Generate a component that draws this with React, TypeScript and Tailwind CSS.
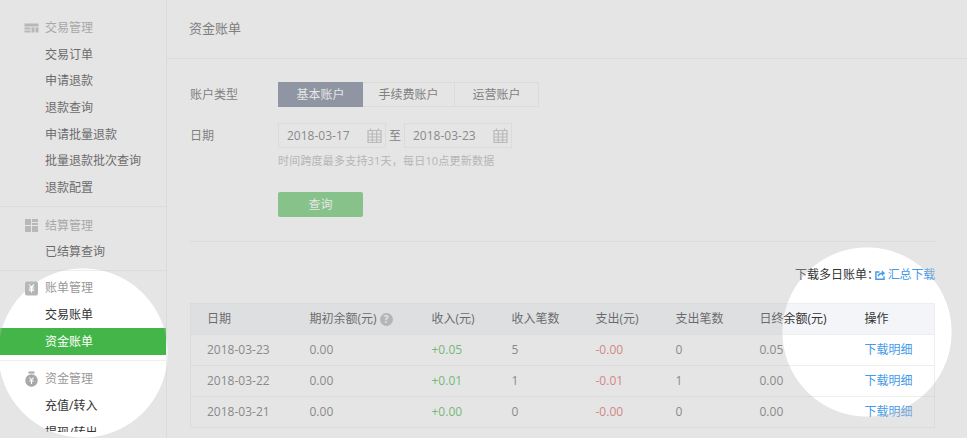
const sans = "font-['Open_Sans','Noto_Sans_CJK_SC',sans-serif]";

const NAV_GROUPS = [
  { title: "交易管理", icon: "card", tight: false, items: ["交易订单", "申请退款", "退款查询", "申请批量退款", "批量退款批次查询", "退款配置"] },
  { title: "结算管理", icon: "grid", tight: true, items: ["已结算查询"] },
  { title: "账单管理", icon: "bill", tight: false, items: ["交易账单", "资金账单"] },
  { title: "资金管理", icon: "bag", tight: false, items: ["充值/转入", "提现/转出"] },
];

const ROWS = [
  { date: "2018-03-23", open: "0.00", income: "+0.05", inCount: "5", out: "-0.00", outCount: "0", end: "0.05" },
  { date: "2018-03-22", open: "0.00", income: "+0.01", inCount: "1", out: "-0.01", outCount: "1", end: "0.00" },
  { date: "2018-03-21", open: "0.00", income: "+0.00", inCount: "0", out: "-0.00", outCount: "0", end: "0.00" },
];

function NavIcon({ name }: { name: string }) {
  if (name === "card")
    return (
      <svg width="15" height="15" viewBox="0 0 15 15" fill="#b4b4b4">
        <rect x="0.5" y="2.5" width="14" height="3" />
        <rect x="0.5" y="6.5" width="6" height="2" />
        <rect x="0.5" y="9.5" width="6" height="2" />
        <rect x="7.5" y="6.5" width="3" height="5" />
        <rect x="11.5" y="6.5" width="3" height="5" />
      </svg>
    );
  if (name === "grid")
    return (
      <svg width="15" height="15" viewBox="0 0 15 15" fill="#b4b4b4">
        <rect x="1" y="1" width="6" height="6" />
        <rect x="8" y="1" width="6" height="3" />
        <rect x="8" y="5" width="6" height="2" />
        <rect x="1" y="8" width="6" height="6" />
        <rect x="8" y="8" width="6" height="6" />
      </svg>
    );
  if (name === "bill")
    return (
      <svg width="15" height="15" viewBox="0 0 15 15">
        <rect x="1" y="0.5" width="13" height="14" rx="2" fill="#b5b5b5" />
        <path d="M5 3.5l2.5 3 2.5-3M4.8 7h5.4M4.8 9.2h5.4M7.5 6.5v5" stroke="#fff" fill="none" strokeWidth="1.2" />
      </svg>
    );
  return (
    <svg width="15" height="16" viewBox="0 0 15 16">
      <rect x="4.5" y="0.5" width="6" height="2" fill="#a8a8a8" />
      <circle cx="7.5" cy="9.5" r="6.2" fill="#a8a8a8" />
      <path d="M5.5 6.5l2 2.5 2-2.5M5.3 10h4.4M7.5 9v4" stroke="#fff" fill="none" strokeWidth="1.1" />
    </svg>
  );
}

function Sidebar() {
  return (
    <aside className="w-[167px] shrink-0 border-r border-[#eeeeee]">
      {/* the last item is cut off in the original capture */}
      <div className="h-[432px] overflow-hidden pt-[14.5px]">
        {NAV_GROUPS.map((group, i) => (
          <div
            key={group.title}
            className={i === 3 ? "" : group.tight ? "border-b border-[#eeeeee] pb-[4px] mb-[4px]" : "border-b border-[#eeeeee] pb-[5px] mb-[5px]"}
          >
            <div className="h-[27px] flex items-center pl-[24px] gap-[6px] text-[#999999]">
              <NavIcon name={group.icon} />
              <span>{group.title}</span>
            </div>
            {group.items.map((item) => (
              <div
                key={item}
                className={
                  item === "资金账单"
                    ? "h-[26.6px] flex items-center pl-[45px] bg-[#44b549] text-white"
                    : "h-[26.6px] flex items-center pl-[45px] text-[#333333]"
                }
              >
                {item}
              </div>
            ))}
          </div>
        ))}
      </div>
    </aside>
  );
}

function DateInput({ value }: { value: string }) {
  return (
    <div className="w-[108px] h-[25px] border border-[#eeeeee] flex items-center justify-between pl-[8px] pr-[3px] text-[#666666]">
      <span>{value}</span>
      <svg width="15" height="15" viewBox="0 0 15 15" fill="none" stroke="#b8b8b8" strokeWidth="1.2">
        <path d="M1 2.5h13v12H1zM1 6h13M1 9h13M1 12h13M5.3 2.5v12M9.7 2.5v12M3.5 .5v2M11.5 .5v2" />
      </svg>
    </div>
  );
}

function BillForm() {
  return (
    <div className="pt-[23px] pb-[24px] mr-[31px] border-b border-[#eeeeee]">
      <div className="flex items-center h-[25px]">
        <span className="w-[88px] text-[#555555]">账户类型</span>
        <div className="flex h-[25px]">
          <div className="w-[85px] flex items-center justify-center bg-[#707b91] text-white">基本账户</div>
          <div className="w-[92px] flex items-center justify-center border-y border-r border-[#eeeeee] text-[#555555]">手续费账户</div>
          <div className="w-[84px] flex items-center justify-center border-y border-r border-[#eeeeee] text-[#555555]">运营账户</div>
        </div>
      </div>
      <div className="flex items-center h-[25px] mt-[16px]">
        <span className="w-[88px] text-[#555555]">日期</span>
        <DateInput value="2018-03-17" />
        <span className="w-[18px] text-center text-[#555555]">至</span>
        <DateInput value="2018-03-23" />
      </div>
      <div className="ml-[88px] mt-[4px] h-[17px] leading-[17px] text-[11px] tracking-[0.2px] text-[#afafaf]">时间跨度最多支持31天，每日10点更新数据</div>
      <div className="ml-[88px] mt-[23px] w-[85px] h-[25px] rounded-[2px] bg-[#62c566] text-white flex items-center justify-center">查询</div>
    </div>
  );
}

function BillTable() {
  const head = "h-[31px] pl-[16px] text-left font-normal";
  const cell = "h-[31px] pl-[16px] border-t border-[#eeeeee]";
  return (
    <table className="w-[745px] table-fixed border border-[#eeeeee] border-collapse">
      <colgroup>
        <col className="w-[103px]" />
        <col className="w-[122px]" />
        <col className="w-[80px]" />
        <col className="w-[84px]" />
        <col className="w-[80px]" />
        <col className="w-[84px]" />
        <col className="w-[105px]" />
        <col />
      </colgroup>
      <thead className="bg-[#f4f5f9] text-[#333333]">
        <tr>
          <th className={head}>日期</th>
          <th className={head}>
            <span className="flex items-center gap-[3px] whitespace-nowrap">
              期初余额(元)
              <span className="w-[13px] h-[13px] rounded-full bg-[#b0b0b0] text-white text-[10px] leading-[13px] text-center font-bold">?</span>
            </span>
          </th>
          <th className={head}>收入(元)</th>
          <th className={head}>收入笔数</th>
          <th className={head}>支出(元)</th>
          <th className={head}>支出笔数</th>
          <th className={head + " whitespace-nowrap"}>日终余额(元)</th>
          <th className={head}>操作</th>
        </tr>
      </thead>
      <tbody className="text-[#666666]">
        {ROWS.map((row) => (
          <tr key={row.date}>
            <td className={cell}>{row.date}</td>
            <td className={cell}>{row.open}</td>
            <td className={cell + " text-[#44b549]"}>{row.income}</td>
            <td className={cell}>{row.inCount}</td>
            <td className={cell + " text-[#e15f63]"}>{row.out}</td>
            <td className={cell}>{row.outCount}</td>
            <td className={cell}>{row.end}</td>
            <td className={cell + " text-[#459ae9]"}>下载明细</td>
          </tr>
        ))}
      </tbody>
    </table>
  );
}

export default function App() {
  return (
    <div className={"relative w-[967px] h-[438px] overflow-hidden bg-white flex text-[12px] " + sans}>
      <Sidebar />
      <main className="flex-1 min-w-0">
        <div className="h-[59px] border-b border-[#eeeeee] pl-[22px] flex items-center text-[13px] text-[#555555]">资金账单</div>
        <div className="pl-[23px]">
          <BillForm />
          <div className="w-[745px] h-[61px] pb-[19px] flex items-end justify-end text-[#333333]">
            <span className="mr-[-4px]">下载多日账单：</span>
            <span className="flex items-center gap-[2px] text-[#459ae9] w-[60px] whitespace-nowrap tracking-[-0.2px]">
              <svg width="12" height="12" viewBox="0 0 12 12" fill="none" stroke="#459ae9" strokeWidth="1.6">
                <path d="M5 2.7H1v8h9V7.5" />
                <path d="M3.5 7.5c.4-2.3 2.3-3.5 5-3.5" />
                <path d="M7.8 1.2 10.9 4 7.8 6.8z" fill="#459ae9" strokeWidth="0.6" />
              </svg>
              汇总下载
            </span>
          </div>
          <BillTable />
        </div>
      </main>
      <div className="absolute inset-0 bg-[rgba(190,190,190,0.4)] [mask-image:radial-gradient(circle_85px_at_83px_353px,transparent_99%,black_100%),radial-gradient(circle_85px_at_867px_332px,transparent_99%,black_100%)] [mask-composite:intersect]" />
    </div>
  );
}
